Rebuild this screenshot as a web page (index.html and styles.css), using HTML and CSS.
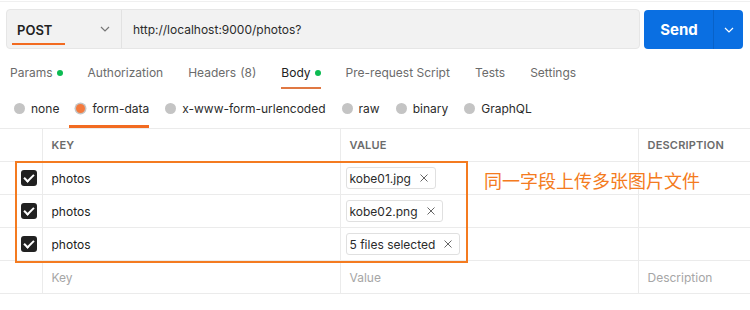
FILE: index.html
```html
<!DOCTYPE html>
<html>

<head>
  <title>Postman - form-data</title>
  <link rel="stylesheet" href="styles.css">
</head>

<body>
  <main class="request">
    <div class="request-bar">
      <div class="url-box">
        <div class="method">
          <span class="method-label">POST</span>
          <svg class="chevron" width="10" height="6" viewBox="0 0 10 6">
            <path d="M1 1 L5 5 L9 1" fill="none" stroke="#777" stroke-width="1.2" />
          </svg>
        </div>
        <div class="url">http://localhost:9000/photos?</div>
      </div>
      <div class="send">
        <span class="send-label">Send</span>
        <span class="send-more">
          <svg width="10" height="6" viewBox="0 0 10 6">
            <path d="M1 1 L5 5 L9 1" fill="none" stroke="#fff" stroke-width="1.2" />
          </svg>
        </span>
      </div>
    </div>

    <nav class="tabs">
      <span class="tab">Params <i class="dot"></i></span>
      <span class="tab">Authorization</span>
      <span class="tab">Headers <span class="count">(8)</span></span>
      <span class="tab tab-active">Body <i class="dot"></i></span>
      <span class="tab">Pre-request Script</span>
      <span class="tab">Tests</span>
      <span class="tab">Settings</span>
    </nav>

    <div class="body-types">
      <span class="body-type"><i class="radio"></i>none</span>
      <span class="body-type body-type-active"><i class="radio radio-on"></i>form-data</span>
      <span class="body-type"><i class="radio"></i>x-www-form-urlencoded</span>
      <span class="body-type"><i class="radio"></i>raw</span>
      <span class="body-type"><i class="radio"></i>binary</span>
      <span class="body-type"><i class="radio"></i>GraphQL</span>
    </div>

    <div class="params">
      <table class="params-table">
        <colgroup>
          <col class="col-check">
          <col class="col-key">
          <col class="col-value">
          <col class="col-desc">
        </colgroup>
        <thead>
          <tr>
            <th class="cell-check"></th>
            <th>KEY</th>
            <th>VALUE</th>
            <th>DESCRIPTION</th>
          </tr>
        </thead>
        <tbody>
          <tr>
            <td class="cell-check"><span class="checkbox"></span></td>
            <td>photos</td>
            <td class="cell-file"><span class="file-chip">kobe01.jpg <svg class="remove" width="8" height="8" viewBox="0 0 8 8"><path d="M0.5 0.5 L7.5 7.5 M7.5 0.5 L0.5 7.5" stroke="#666" stroke-width="1" /></svg></span></td>
            <td></td>
          </tr>
          <tr>
            <td class="cell-check"><span class="checkbox"></span></td>
            <td>photos</td>
            <td class="cell-file"><span class="file-chip">kobe02.png <svg class="remove" width="8" height="8" viewBox="0 0 8 8"><path d="M0.5 0.5 L7.5 7.5 M7.5 0.5 L0.5 7.5" stroke="#666" stroke-width="1" /></svg></span></td>
            <td></td>
          </tr>
          <tr>
            <td class="cell-check"><span class="checkbox"></span></td>
            <td>photos</td>
            <td class="cell-file"><span class="file-chip">5 files selected <svg class="remove" width="8" height="8" viewBox="0 0 8 8"><path d="M0.5 0.5 L7.5 7.5 M7.5 0.5 L0.5 7.5" stroke="#666" stroke-width="1" /></svg></span></td>
            <td></td>
          </tr>
          <tr class="placeholder">
            <td class="cell-check"></td>
            <td>Key</td>
            <td>Value</td>
            <td>Description</td>
          </tr>
        </tbody>
      </table>

      <div class="highlight"></div>
      <div class="note">同一字段上传多张图片文件</div>
    </div>
  </main>
</body>

</html>
```

FILE: styles.css
```css
body {
  margin: 0;
  font-family: Inter, "Noto Sans", Arial, "Noto Sans CJK SC", sans-serif;
  color: #212121;
  background-color: white;
}

.request {
  border-top: 1px solid #f0f0f0;
  margin-top: 1px;
}

.request-bar {
  display: flex;
  padding: 7px 7px 0 6px;
  gap: 4px;
}

.url-box {
  flex: 1;
  height: 38px;
  display: flex;
  align-items: center;
  background-color: #f2f2f2;
  border: 1px solid #e6e6e6;
  border-radius: 4px;
}

.method {
  box-sizing: border-box;
  width: 115px;
  height: 100%;
  display: flex;
  align-items: center;
  justify-content: space-between;
  padding: 0 11px 0 5px;
  border-right: 1px solid #e2e2e2;
}

.method-label {
  width: 48px;
  padding: 8px 0 5px 5px;
  font-size: 13px;
  font-weight: 600;
  border-bottom: 2px solid #f26b21;
}

.url {
  padding-left: 11px;
  font-size: 12px;
  color: #2b2b2b;
}

.send {
  width: 99px;
  height: 39px;
  margin-top: 1px;
  display: flex;
  align-items: center;
  background-color: #0a6fe2;
  border-radius: 4px;
  color: white;
}

.send-label {
  width: 68px;
  text-align: center;
  font-size: 15px;
  font-weight: 700;
  padding-left: 1px;
}

.send-more {
  flex: 1;
  height: 100%;
  display: flex;
  align-items: center;
  justify-content: center;
  border-left: 1px solid #0862c9;
}

.tabs {
  display: flex;
  height: 40px;
  padding-left: 10px;
  gap: 25px;
}

.tab {
  display: flex;
  align-items: center;
  gap: 4px;
  padding-top: 9px;
  font-size: 12px;
  color: #6b6b6b;
  border-bottom: 2px solid transparent;
}

.tab-active {
  color: #212121;
  border-bottom-color: #e07843;
}

.dot {
  width: 6px;
  height: 6px;
  border-radius: 50%;
  background-color: #0cbb52;
}

.body-types {
  display: flex;
  height: 39px;
  padding-left: 8px;
  gap: 10px;
  border-bottom: 1px solid #ebebeb;
}

.body-type {
  display: flex;
  align-items: center;
  gap: 6px;
  padding: 3px 0 0 6px;
  font-size: 12px;
  color: #2b2b2b;
  border-bottom: 3px solid transparent;
}

.body-type-active {
  border-bottom-color: #f26b21;
}

.radio {
  width: 11px;
  height: 11px;
  border-radius: 50%;
  background-color: #c4c4c4;
}

.radio-on {
  background-color: #f47a3e;
  box-shadow: 0 0 0 1.5px #c4c4c4;
  width: 9px;
  height: 9px;
  margin: 0 1px;
}

.params {
  position: relative;
}

.params-table {
  border-collapse: collapse;
  table-layout: fixed;
  width: 750px;
}

.col-check {
  width: 42px;
}

.col-key,
.col-value {
  width: 298px;
}

.col-desc {
  width: 112px;
}

.params-table th,
.params-table td {
  height: 32px;
  padding: 0 0 0 9px;
  border-bottom: 1px solid #ebebeb;
  border-left: 1px solid #ebebeb;
  text-align: left;
  font-size: 12px;
  white-space: nowrap;
  overflow: hidden;
}

.params-table th {
  font-size: 11px;
  font-weight: 600;
  color: #6b6b6b;
  letter-spacing: 0.2px;
}

.params-table .cell-check {
  border-left: none;
  padding-left: 21px;
}

.params-table .cell-file {
  padding-left: 5px;
}

.checkbox {
  display: block;
  width: 16px;
  height: 16px;
  border-radius: 3px;
  background-color: #212121;
  position: relative;
}

.checkbox::after {
  content: "";
  position: absolute;
  left: 5px;
  top: 2px;
  width: 4px;
  height: 8px;
  border: solid white;
  border-width: 0 2px 2px 0;
  transform: rotate(45deg);
}

.file-chip {
  display: inline-flex;
  align-items: center;
  gap: 9px;
  height: 20px;
  padding: 0 7px 0 3px;
  border: 1px solid #e0e0e0;
  border-radius: 3px;
  font-size: 12px;
  color: #2b2b2b;
}

.placeholder td {
  color: #a6a6a6;
}

.highlight {
  position: absolute;
  left: 15px;
  top: 32px;
  width: 449px;
  height: 98px;
  border: 2px solid #f47b20;
}

.note {
  position: absolute;
  left: 484px;
  top: 38px;
  font-size: 18px;
  color: #f47b20;
  font-family: "Noto Sans CJK SC", sans-serif;
}
```
